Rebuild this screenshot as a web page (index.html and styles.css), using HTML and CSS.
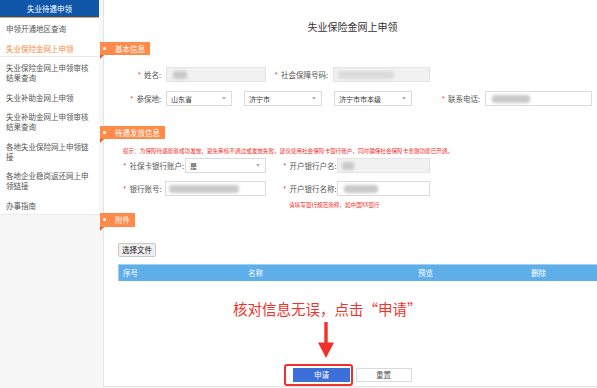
FILE: index.html
```html
<!DOCTYPE html>
<html lang="zh-CN">
  <head>
    <meta charset="UTF-8" />
    <meta name="viewport" content="width=device-width, initial-scale=1.0" />
    <title>失业保险金网上申领</title>
    <link rel="stylesheet" href="styles.css">
  </head>
  <body>
    <div class="page">
      <aside class="sidebar">
        <div class="side-head">失业待遇申领</div>
        <ul class="side-menu">
          <li>申领开通地区查询</li>
          <li class="active">失业保险金网上申领</li>
          <li>失业保险金网上申领审核结果查询</li>
          <li>失业补助金网上申领</li>
          <li>失业补助金网上申领审核结果查询</li>
          <li>各地失业保险网上申领链接</li>
          <li>各地企业稳岗返还网上申领链接</li>
          <li>办事指南</li>
        </ul>
      </aside>

      <main class="panel">
        <h1 class="title">失业保险金网上申领</h1>

        <!-- 基本信息 -->
        <div class="tag">基本信息</div>
        <div class="row row-name">
          <label class="lbl lbl-a"><i>*</i>姓名:</label>
          <div class="box gray w-100"><span class="mask mask-name"></span></div>
          <label class="lbl lbl-b"><i>*</i>社会保障号码:</label>
          <div class="box gray w-97"><span class="mask mask-id"></span></div>
        </div>
        <div class="row row-area">
          <label class="lbl lbl-a"><i>*</i>参保地:</label>
          <div class="box select w-66">山东省</div>
          <div class="box select w-78 spaced">济宁市</div>
          <div class="box select w-78 spaced">济宁市市本级</div>
          <label class="lbl lbl-phone"><i>*</i>联系电话:</label>
          <div class="box w-107"><span class="mask mask-phone"></span></div>
        </div>

        <!-- 待遇发放信息 -->
        <div class="tag tag-pay">待遇发放信息</div>
        <p class="hint">提示：为保障待遇能够成功发放，避免审核不通过或发放失败，建议使用社会保障卡银行账户，同时确保社会保障卡金融功能已开通。</p>
        <div class="row row-card">
          <label class="lbl lbl-card"><i>*</i>社保卡银行账户:</label>
          <div class="box select w-81">是</div>
          <label class="lbl lbl-bank"><i>*</i>开户银行户名:</label>
          <div class="box gray w-93"><span class="mask mask-holder"></span></div>
        </div>
        <div class="row row-account">
          <label class="lbl lbl-acct"><i>*</i>银行账号:</label>
          <div class="box w-101"><span class="mask mask-acct"></span></div>
          <label class="lbl lbl-bank"><i>*</i>开户银行名称:</label>
          <div class="box w-93"><span class="mask mask-bank"></span></div>
        </div>
        <p class="note">请填写银行规范简称，如中国XX银行</p>

        <!-- 附件 -->
        <div class="tag tag-file">附件</div>
        <button class="file-btn" type="button">选择文件</button>
        <div class="thead">
          <span>序号</span>
          <span>名称</span>
          <span>预览</span>
          <span>删除</span>
        </div>

        <p class="callout">核对信息无误，点击“申请”</p>
        <svg class="arrow" width="16" height="36" viewBox="0 0 16 36">
          <rect x="6.3" y="0" width="3.4" height="22" fill="#f0312b" />
          <polygon points="0,20.5 16,20.5 8,36" fill="#f0312b" />
        </svg>
        <div class="actions">
          <span class="mark"><button class="btn btn-primary" type="button">申请</button></span>
          <button class="btn btn-reset" type="button">重置</button>
        </div>
      </main>
    </div>
  </body>
</html>
```

FILE: styles.css
```css
* {
  box-sizing: border-box;
}

body {
  margin: 0;
  background: #f7f7f7;
  font-family: "Noto Sans CJK SC", "Noto Sans", sans-serif;
  color: #555;
  overflow: hidden;
}

.page {
  display: flex;
  gap: 4px;
  height: 388px;
}

/* menu on the left */
.sidebar {
  flex: none;
  width: 99px;
  align-self: flex-start;
  background: #fff;
  border-bottom: 1px solid #ececec;
}
.side-head {
  height: 18px;
  background: #1057aa;
  border-bottom: 1px solid #f29b3a;
  color: #fff;
  font-size: 7.5px;
  line-height: 17px;
  text-align: center;
}
.side-menu {
  list-style: none;
  margin: 0;
  padding: 0;
}
.side-menu li {
  padding: 6px 8px 3.5px 6px;
  font-size: 7.5px;
  line-height: 10px;
  color: #555;
}
.side-menu .active {
  color: #f7893c;
  padding-bottom: 2.5px;
  border-bottom: 1px solid #e8e8e8;
}

/* form panel */
.panel {
  flex: none;
  width: 520px;
  height: 387px;
  background: #fff;
  border-left: 1px solid #e4e4e4;
  border-bottom: 1px solid #e4e4e4;
}
.title {
  width: 497px;
  margin: 20.5px 0 0;
  font-size: 10px;
  line-height: 12px;
  font-weight: normal;
  text-align: center;
  color: #333;
}

.tag {
  position: relative;
  width: fit-content;
  height: 13px;
  margin: 9.5px 0 0 -4px;
  padding: 0 5px 0 15px;
  background: #ff8b4a;
  color: #fff;
  font-size: 7.5px;
  line-height: 13px;
}
.tag::before {
  content: "";
  position: absolute;
  left: 3px;
  top: 5px;
  width: 3px;
  height: 3px;
  border-radius: 50%;
  background: #fff;
}
.tag::after {
  content: "";
  position: absolute;
  left: 0;
  top: 100%;
  border-top: 4px solid #d2672c;
  border-right: 4px solid transparent;
}
.tag-pay {
  margin-top: 20px;
}
.tag-file {
  margin-top: 4px;
  height: 14px;
  line-height: 14px;
}

.row {
  display: flex;
  align-items: center;
  height: 15px;
}
.row-name {
  margin-top: 12px;
}
.row-area {
  margin-top: 9px;
}
.row-card {
  margin-top: 3px;
  padding-left: 19px;
}
.row-account {
  margin-top: 8px;
  padding-left: 19px;
}

.lbl {
  flex: none;
  font-size: 7.5px;
  line-height: 15px;
  color: #555;
  white-space: nowrap;
}
.lbl i {
  font-style: normal;
  color: #e8402f;
  margin-right: 3px;
}
.lbl-a {
  width: 62px;
  padding-right: 5px;
  text-align: right;
}
.lbl-b {
  width: 67px;
  padding-right: 5px;
  text-align: right;
}
.lbl-phone {
  width: 73px;
  padding-right: 5px;
  text-align: right;
}
.lbl-card {
  width: 62px;
}
.lbl-acct {
  width: 42px;
}
.lbl-bank {
  width: 71px;
  padding-left: 17px;
}

.box {
  flex: none;
  display: flex;
  align-items: center;
  height: 15px;
  padding-left: 4px;
  border: 1px solid #dcdcdc;
  background: #fff;
  font-size: 7px;
  color: #333;
}
.box.gray {
  background: #f1f1f1;
  border-color: #e4e4e4;
}
.select::after {
  content: "";
  margin-left: auto;
  margin-right: 5px;
  border-left: 2.5px solid transparent;
  border-right: 2.5px solid transparent;
  border-top: 3px solid #b5b5b5;
}
.spaced {
  margin-left: 12px;
}
.w-66 { width: 66px; }
.w-78 { width: 78px; }
.w-81 { width: 81px; }
.w-93 { width: 93px; }
.w-97 { width: 97px; }
.w-100 { width: 100px; }
.w-101 { width: 101px; }
.w-107 { width: 107px; }

/* blurred personal data */
.mask {
  height: 8px;
  border-radius: 3px;
  background: #c9c9c9;
  filter: blur(1.6px);
}
.mask-name { width: 14px; margin-left: 2px; }
.mask-id { width: 56px; background: #dadada; }
.mask-phone { width: 38px; margin-left: 2px; }
.mask-holder { width: 12px; }
.mask-acct { width: 70px; margin-left: -1px; }
.mask-bank { width: 34px; margin-left: 2px; }

.hint,
.note {
  margin: 0;
  font-size: 5.6px;
  line-height: 8px;
  color: #f0302a;
  white-space: nowrap;
}
.hint {
  margin: 8px 0 0 19px;
}
.note {
  margin: 5px 0 0 185px;
}

.file-btn {
  display: block;
  height: 14px;
  margin: 16px 0 0 14px;
  padding: 0 3px;
  border: 1px solid #c8c8c8;
  border-radius: 2px;
  background: #efefef;
  font-family: inherit;
  font-size: 7.5px;
  line-height: 12px;
  color: #222;
}

.thead {
  display: grid;
  grid-template-columns: 125px 170px 113px 1fr;
  width: 506px;
  height: 17px;
  margin: 7px 0 0 14px;
  background: #5eaeea;
  border-top: 1px solid #a3d0f2;
  border-left: 1px solid #a3d0f2;
  color: #fff;
  font-size: 7.5px;
  line-height: 16px;
}
.thead span {
  padding-left: 4px;
}

/* annotation */
.callout {
  margin: 18px 0 0 129px;
  font-size: 14.5px;
  line-height: 20px;
  color: #f2312a;
  white-space: nowrap;
}
.arrow {
  display: block;
  margin: 3px 0 0 214px;
}

.actions {
  display: flex;
  align-items: center;
  margin: 6px 0 0 180px;
}
.mark {
  display: flex;
  padding: 2px 1px 2px 7px;
  border: 2px solid #f0312b;
  border-radius: 3px;
}
.btn {
  width: 57px;
  height: 14px;
  padding: 0;
  border: 0;
  font-family: inherit;
  font-size: 7.5px;
  line-height: 14px;
  text-align: center;
}
.btn-primary {
  background: #3c6fd8;
  color: #fff;
}
.btn-reset {
  width: 56px;
  margin-left: 2.5px;
  background: #fff;
  border: 1px solid #dadada;
  line-height: 12px;
  color: #555;
}
```
